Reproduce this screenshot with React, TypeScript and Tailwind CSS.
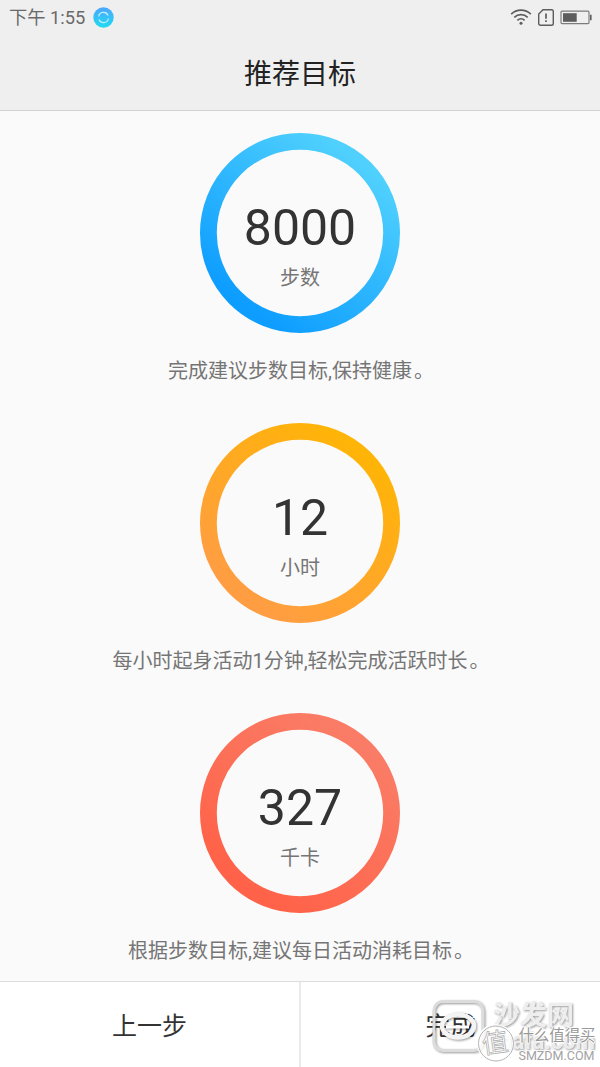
type Goal = {
  id: string;
  value: string;
  unit: string;
  hint: string;
  from: string;
  to: string;
};

const GOALS: Goal[] = [
  {
    id: "steps",
    value: "8000",
    unit: "步数",
    hint: "完成建议步数目标,保持健康",
    from: "#0d9dff",
    to: "#4fd0fd",
  },
  {
    id: "hours",
    value: "12",
    unit: "小时",
    hint: "每小时起身活动1分钟,轻松完成活跃时长",
    from: "#ff9d42",
    to: "#ffb408",
  },
  {
    id: "calories",
    value: "327",
    unit: "千卡",
    hint: "根据步数目标,建议每日活动消耗目标",
    from: "#ff6248",
    to: "#fa7c66",
  },
];

function StatusBar() {
  return (
    <div className="flex h-[34px] items-center justify-between pl-[9px] pr-2 text-[#6a6a6a]">
      <div className="flex items-center">
        <span className="pt-px text-[18.3px] leading-[34px]">下午 1:55</span>
        <svg className="ml-2 h-[21px] w-[21px]" viewBox="0 0 21 21" fill="none">
          <defs>
            <linearGradient id="sync" x1="0" y1="0" x2="0" y2="1">
              <stop offset="0" stopColor="#4da6ff" />
              <stop offset="1" stopColor="#20dcf0" />
            </linearGradient>
          </defs>
          <circle cx="10.5" cy="10.5" r="10.2" fill="url(#sync)" />
          <path
            d="M5.6 9.5a5 5 0 0 1 9.5-1.1M15.4 11.5a5 5 0 0 1-9.5 1.1"
            stroke="#c5f0ff"
            strokeWidth="1.2"
          />
        </svg>
      </div>
      <div className="flex items-center">
        <svg className="h-[18px] w-[22px]" viewBox="0 0 22 18" fill="none" stroke="#5d5d5d" strokeWidth="1.7">
          <path d="M1.2 6.1a14 14 0 0 1 19.6 0M4.3 9.3a9.6 9.6 0 0 1 13.4 0M7.4 12.4a5.2 5.2 0 0 1 7.2 0" />
          <circle cx="11" cy="15.2" r="1.5" fill="#5d5d5d" stroke="none" />
        </svg>
        <svg className="ml-[5px] h-[19px] w-[18px]" viewBox="0 0 18 19" fill="none" stroke="#5d5d5d">
          <path
            d="M6 1.7h8.5a1.8 1.8 0 0 1 1.8 1.8v12a1.8 1.8 0 0 1-1.8 1.8h-11a1.8 1.8 0 0 1-1.8-1.8V6z"
            strokeWidth="1.4"
          />
          <path d="M9 5.6v5.2M9 12.2v1.8" strokeWidth="1.7" />
        </svg>
        <svg className="ml-[5px] h-[15px] w-8" viewBox="0 0 32 15">
          <rect x="1" y="1.2" width="28" height="12.4" rx="1" fill="none" stroke="#7c7c7c" strokeWidth="1.2" />
          <rect x="3" y="3.2" width="13.7" height="8.6" fill="#5d5d5d" />
          <path d="M30 4.8h1.6v5.4H30z" fill="#5d5d5d" />
        </svg>
      </div>
    </div>
  );
}

function GoalRing({ goal }: { goal: Goal }) {
  return (
    <section className="flex h-[290px] flex-col items-center">
      <div className="relative h-[200px] w-[200px]">
        <svg className="absolute inset-0" viewBox="0 0 200 200" fill="none">
          <defs>
            <linearGradient id={goal.id} x1="0.2" y1="0.9" x2="0.8" y2="0.1">
              <stop offset="0" stopColor={goal.from} />
              <stop offset="1" stopColor={goal.to} />
            </linearGradient>
          </defs>
          <circle cx="100" cy="100" r="91.6" stroke={`url(#${goal.id})`} strokeWidth="16.8" />
        </svg>
        <div className="relative flex flex-col items-center pt-[65px]">
          <span className="text-[50px] leading-[60px] text-[#333]">{goal.value}</span>
          <span className="mt-[5px] text-[20px] leading-[30px] text-[#757575]">{goal.unit}</span>
        </div>
      </div>
      <p className="mt-[23px] whitespace-nowrap text-[20px] leading-[30px] text-[#757575]">
        {goal.hint}
        <span className="relative left-[2px]">。</span>
      </p>
    </section>
  );
}

function Watermark() {
  return (
    <svg
      className="pointer-events-none absolute right-1 bottom-0 h-[72px] w-[168px]"
      viewBox="428 995 168 72"
      fill="none"
    >
      <g className="drop-shadow-[1px_1px_0.8px_rgba(0,0,0,0.4)]">
        <rect x="434" y="1001.5" width="49" height="49" rx="9" stroke="#dcdcdc" strokeWidth="3" />
        <ellipse cx="458" cy="1026" rx="16" ry="11.5" stroke="#f4f4f4" strokeWidth="4.5" />
        <path d="M446 1027h23" stroke="#fff" strokeWidth="3" />
        <text x="493" y="1025" fontSize="27" fontWeight="700" fill="#eee">
          沙发网
        </text>
        <text x="488" y="1049" fontSize="23" fontWeight="700" fill="#ececec" textLength="107" lengthAdjust="spacingAndGlyphs">
          shafa.com
        </text>
      </g>
      <circle cx="495.5" cy="1043" r="18" fill="#fff" fillOpacity="0.8" stroke="#fff" strokeWidth="1.6" />
      <circle cx="496" cy="1043.5" r="17.5" stroke="#b4b4b4" strokeWidth="1" />
      <text x="482" y="1052" fontSize="26" fill="#fff" stroke="#aaa" strokeWidth="0.7" transform="rotate(-8 495 1043)">
        值
      </text>
      <g stroke="#fff" strokeWidth="1.6" className="[paint-order:stroke]">
        <text x="518.5" y="1041" fontSize="15.4" fill="#999">
          什么值得买
        </text>
        <text x="518.5" y="1060" fontSize="13" fill="#a2a2a2" textLength="76" lengthAdjust="spacingAndGlyphs">
          SMZDM.COM
        </text>
      </g>
    </svg>
  );
}

export default function App() {
  return (
    <div className="relative flex h-[1067px] w-[600px] flex-col overflow-hidden bg-[#fafafa] font-['Roboto','Noto_Sans_CJK_SC',sans-serif]">
      <header className="h-[111px] shrink-0 border-b border-[#d2d2d2] bg-[#efefef]">
        <StatusBar />
        <h1 className="pt-5 text-center text-[28px] leading-[42px] text-[#222]">推荐目标</h1>
      </header>
      <main className="min-h-0 flex-1 pt-[22px]">
        {GOALS.map((goal) => (
          <GoalRing key={goal.id} goal={goal} />
        ))}
      </main>
      <footer className="flex h-[86px] shrink-0 border-t border-[#dedede] bg-white text-[25px] text-[#333]">
        <button className="flex-1 border-r-2 border-[#eaeaea] pt-[5px]">上一步</button>
        <button className="flex-1 pt-[5px]">完成</button>
      </footer>
      <Watermark />
    </div>
  );
}
